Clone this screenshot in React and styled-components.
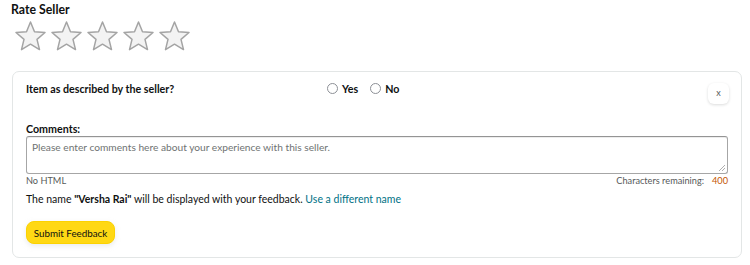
import React from "react";
import styled, { createGlobalStyle } from "styled-components";

const Global = createGlobalStyle`
  html, body { margin: 0; padding: 0; background: #fff; }
  body { font-family: "Lato", "Noto Sans", sans-serif; color: #0f1111; }
  * { box-sizing: border-box; }
`;

const Page = styled.div`
  width: 750px;
  height: 265px;
  padding: 3px 9px 0 12px;
  display: flex;
  flex-direction: column;
`;

const Title = styled.div`
  font-size: 12.3px;
  font-weight: 700;
  line-height: 14px;
  margin-left: -1px;
`;

const Stars = styled.div`
  display: flex;
  gap: 3px;
  margin-top: 3px;
  margin-left: 2px;
`;

const StarIcon = () => (
  <svg width="33" height="33" viewBox="0 0 33 33">
    <path
      d="M16.5 2 L20.5 11.7 L31 12.5 L23 19.4 L25.5 29.6 L16.5 24.2 L7.5 29.6 L10 19.4 L2 12.5 L12.5 11.7 Z"
      fill="#f3f3f3"
      stroke="#a4a4a4"
      strokeWidth="1.5"
      strokeLinejoin="round"
    />
  </svg>
);

const Card = styled.div`
  margin-top: 18px;
  width: 730px;
  height: 187px;
  border: 1px solid #e3e6e6;
  border-radius: 7px;
  padding: 9px 13px 0 13px;
  position: relative;
`;

const QuestionRow = styled.div`
  display: flex;
  align-items: center;
  height: 14px;
`;

const Question = styled.div`
  font-size: 10.7px;
  font-weight: 700;
  width: 301px;
`;

const Radio = styled.label`
  display: flex;
  align-items: center;
  font-size: 10.7px;
  font-weight: 700;
  margin-right: 12px;
  gap: 4px;
`;

const RadioCircle = styled.span`
  width: 11px;
  height: 11px;
  border-radius: 50%;
  border: 1px solid #8d9096;
  background: #fff;
`;

const CloseButton = styled.div`
  position: absolute;
  right: 12px;
  top: 11px;
  width: 21px;
  height: 21px;
  border-radius: 6px;
  background: #fff;
  box-shadow: 0 1px 3px rgba(15, 17, 17, 0.15);
  display: flex;
  align-items: center;
  justify-content: center;
  font-size: 9px;
  color: #565959;
  padding-bottom: 2px;
`;

const Label = styled.div`
  font-size: 10.7px;
  font-weight: 700;
  margin-top: 27px;
  line-height: 13px;
`;

const TextArea = styled.div`
  margin-top: 1px;
  width: 702px;
  height: 38px;
  border: 1px solid #a6a6a6;
  border-top-color: #949494;
  border-radius: 3px;
  box-shadow: 0 1px 0 rgba(0, 0, 0, 0.07) inset;
  padding: 4px 5px;
  font-size: 10.2px;
  color: #6f7373;
  position: relative;
`;

const Grip = styled.svg`
  position: absolute;
  right: 1px;
  bottom: 1px;
`;

const MetaRow = styled.div`
  display: flex;
  justify-content: space-between;
  width: 702px;
  font-size: 9.2px;
  color: #565959;
  margin-top: 1px;
  line-height: 12px;
`;

const Count = styled.span`
  color: #c45500;
  margin-left: 8px;
`;

const NameLine = styled.div`
  font-size: 10.5px;
  margin-top: 5px;
  line-height: 14px;
  color: #0f1111;
`;

const Link = styled.span`
  color: #007185;
`;

const SubmitButton = styled.div`
  margin-top: 15px;
  width: 89px;
  height: 23px;
  border-radius: 8px;
  background: #ffd814;
  border: 1px solid #fcd200;
  box-shadow: 0 2px 5px rgba(213, 217, 217, 0.5);
  font-size: 9.8px;
  display: flex;
  align-items: center;
  justify-content: center;
  color: #0f1111;
`;

export default function App() {
  return (
    <>
      <Global />
      <Page>
        <Title>Rate Seller</Title>
        <Stars>
          {[0, 1, 2, 3, 4].map((i) => (
            <StarIcon key={i} />
          ))}
        </Stars>
        <Card>
          <QuestionRow>
            <Question>Item as described by the seller?</Question>
            <Radio>
              <RadioCircle />
              Yes
            </Radio>
            <Radio>
              <RadioCircle />
              No
            </Radio>
          </QuestionRow>
          <CloseButton>x</CloseButton>
          <Label>Comments:</Label>
          <TextArea>
            Please enter comments here about your experience with this seller.
            <Grip width="8" height="8" viewBox="0 0 8 8">
              <path d="M7 1 L1 7 M7 4 L4 7" stroke="#9a9a9a" strokeWidth="0.8" />
            </Grip>
          </TextArea>
          <MetaRow>
            <span>No HTML</span>
            <span>
              Characters remaining:<Count>400</Count>
            </span>
          </MetaRow>
          <NameLine>
            The name <b>"Versha Rai"</b> will be displayed with your feedback.{" "}
            <Link>Use a different name</Link>
          </NameLine>
          <SubmitButton>Submit Feedback</SubmitButton>
        </Card>
      </Page>
    </>
  );
}
